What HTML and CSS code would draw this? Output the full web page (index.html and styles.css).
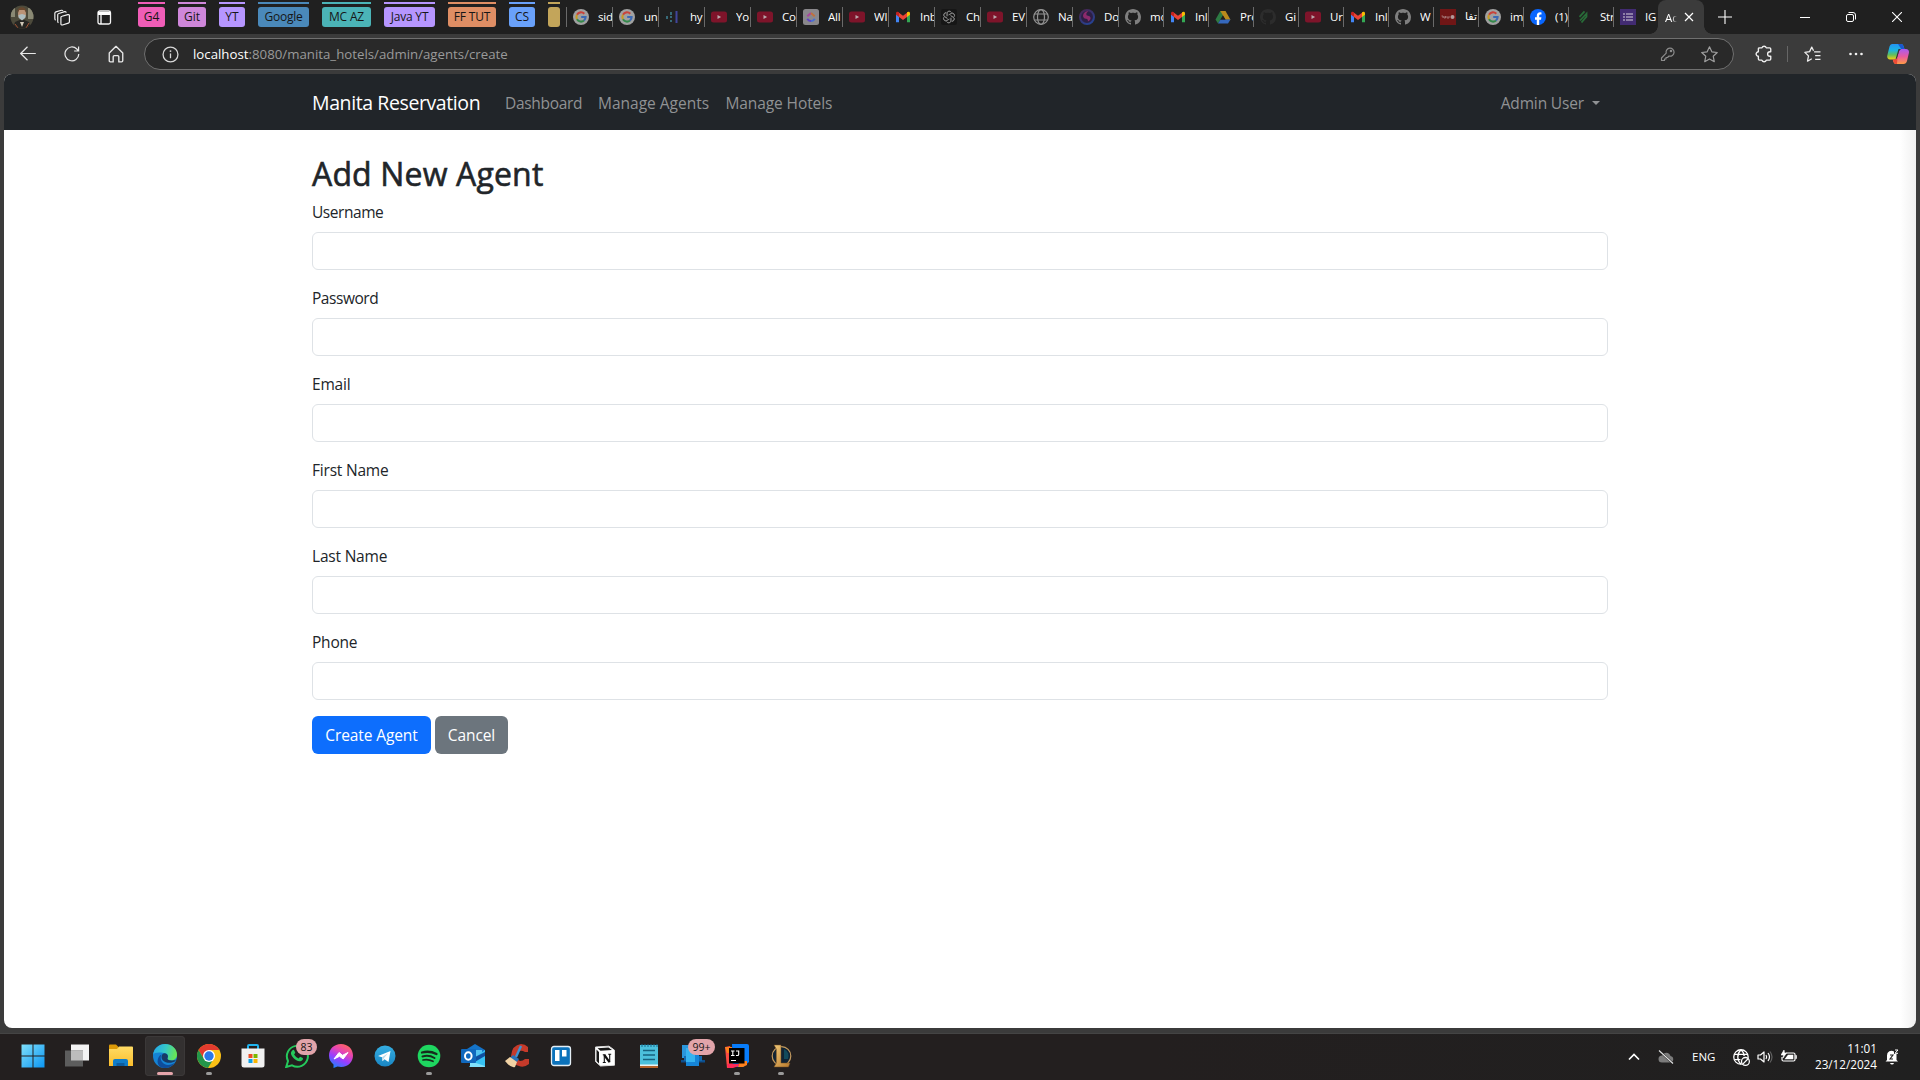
FILE: index.html
```html
<!DOCTYPE html>
<html lang="en">
<head>
<meta charset="utf-8">
<title>Add New Agent</title>
<link rel="stylesheet" href="styles.css">
</head>
<body>
<svg class="defs" aria-hidden="true">
  <defs>
    <linearGradient id="gWin" x1="0" y1="0" x2="1" y2="1"><stop offset="0" stop-color="#7fe0fb"/><stop offset="1" stop-color="#0b95f2"/></linearGradient>
    <linearGradient id="gMsg" x1=".7" y1="0" x2=".2" y2="1"><stop offset="0" stop-color="#ff6560"/><stop offset=".3" stop-color="#e845b0"/><stop offset=".6" stop-color="#9a3cff"/><stop offset="1" stop-color="#1688ff"/></linearGradient>
    <linearGradient id="gFold" x1="0" y1="0" x2="0" y2="1"><stop offset="0" stop-color="#ffdc65"/><stop offset="1" stop-color="#fbbd2c"/></linearGradient>
    <linearGradient id="gTel" x1="0" y1="0" x2="0" y2="1"><stop offset="0" stop-color="#35aee2"/><stop offset="1" stop-color="#1a86c4"/></linearGradient>
    <linearGradient id="gEdge" x1="0" y1=".3" x2="1" y2=".5"><stop offset="0" stop-color="#24a8e8"/><stop offset=".5" stop-color="#36c8c8"/><stop offset="1" stop-color="#6ae84f"/></linearGradient>
    <linearGradient id="gCop1" x1="0" y1="0" x2="0" y2="1"><stop offset="0" stop-color="#2494f4"/><stop offset=".4" stop-color="#1cb5e2"/><stop offset=".7" stop-color="#62bf5b"/><stop offset="1" stop-color="#f6cf14"/></linearGradient>
    <linearGradient id="gCop2" x1="0" y1="0" x2="0" y2="1"><stop offset="0" stop-color="#a75bf2"/><stop offset=".5" stop-color="#e85aa0"/><stop offset="1" stop-color="#ff9b45"/></linearGradient>
    <linearGradient id="gGold" x1="0" y1="0" x2="1" y2="1"><stop offset="0" stop-color="#f0c878"/><stop offset="1" stop-color="#b87a2c"/></linearGradient>
    <linearGradient id="gDoc" x1="0" y1="0" x2=".6" y2="1"><stop offset="0" stop-color="#4a2450"/><stop offset="1" stop-color="#27418f"/></linearGradient>
    <symbol id="google" viewBox="0 0 16 16"><circle cx="8" cy="8" r="8" fill="#a1a1a1"/><g fill="none" stroke-width="2.1"><path d="M11.3 4.7A4.6 4.6 0 0 0 4 5.7" stroke="#c9433a"/><path d="M4 5.7a4.6 4.6 0 0 0 0 4.6" stroke="#c79a24"/><path d="M4 10.3a4.6 4.6 0 0 0 7 1.2" stroke="#35894b"/><path d="M11 11.5A4.6 4.6 0 0 0 12.6 8H8.2" stroke="#3b69b5"/></g></symbol>
    <symbol id="youtube" viewBox="0 0 16 16"><rect y="2.5" width="16" height="11" rx="2.5" fill="#7e142a"/><path d="M6.500 6v4l3.600-2z" fill="#b9a8ac"/></symbol>
    <symbol id="gmail" viewBox="0 0 16 16"><path d="M1 4.5v8.7h3V7z" fill="#4285f4"/><path d="M15 4.5v8.7h-3V7z" fill="#34a853"/><path d="M12 4v4l3-2.2V4.2c0-1.500-1.700-2-3-.9z" fill="#fbbc04"/><path d="M4 8V3.700l4 3 4-3V8l-4 3z" fill="#ea4335"/><path d="M1 5.800 4 8V3.300C2.700 2.300 1 2.800 1 4.300z" fill="#c5221f"/></symbol>
    <symbol id="github" viewBox="0 0 16 16"><path fill="currentColor" d="M8 0C3.580 0 0 3.580 0 8c0 3.540 2.290 6.530 5.470 7.590.4.070.55-.17.55-.38 0-.19-.01-.82-.01-1.490-2.010.37-2.530-.49-2.690-.94-.09-.23-.48-.94-.82-1.130-.28-.15-.68-.52-.01-.53.63-.01 1.080.58 1.230.82.72 1.210 1.870.87 2.330.66.07-.52.28-.87.51-1.070-1.780-.2-3.640-.89-3.640-3.950 0-.87.31-1.590.82-2.150-.08-.2-.36-1.020.08-2.120 0 0 .67-.21 2.200.82.64-.18 1.320-.27 2-.27s1.360.09 2 .27c1.530-1.040 2.200-.82 2.200-.82.44 1.100.16 1.920.08 2.120.51.56.82 1.270.82 2.150 0 3.070-1.870 3.750-3.650 3.950.29.25.54.73.54 1.480 0 1.070-.01 1.930-.01 2.200 0 .21.15.46.55.38A8.010 8.010 0 0 0 16 8c0-4.420-3.580-8-8-8z"/></symbol>
    <symbol id="globe" viewBox="0 0 16 16"><g fill="none" stroke="#929292" stroke-width="1.2"><circle cx="8" cy="8" r="7.300"/><ellipse cx="8" cy="8" rx="3.500" ry="7.300"/><path d="M1.500 5h13M1.500 11h13"/></g></symbol>
    <symbol id="hyper" viewBox="0 0 16 16"><g fill="#376a78"><rect x="1" y="7" width="2" height="3"/><rect x="5" y="3" width="2" height="3"/><rect x="5" y="7" width="2" height="2"/><rect x="5" y="11" width="2" height="2"/></g><rect x="10.500" y="2" width="2" height="12" fill="#41459b"/></symbol>
    <symbol id="clickup" viewBox="0 0 16 16"><rect width="16" height="16" rx="2.500" fill="#8a888c"/><path d="M4.300 7.200 8 4" fill="none" stroke="#a8459c" stroke-width="2"/><path d="m8 4 3.700 3.200" fill="none" stroke="#c0703c" stroke-width="2"/><path d="M4.200 9.800Q6 12 8 12" fill="none" stroke="#5f44c4" stroke-width="2"/><path d="M8 12q2 0 3.800-2.200" fill="none" stroke="#4a6fd0" stroke-width="2"/></symbol>
    <symbol id="gpt" viewBox="0 0 16 16"><rect width="16" height="16" rx="2" fill="#161616"/><g fill="none" stroke="#858585" stroke-width=".8"><path id="petal" d="M6 7.500V4.500a2.300 2.300 0 0 1 4.300-1.200M8 5.800l2.800-1.600a2.300 2.300 0 0 1 2.300 3.500"/><use href="#petal" transform="rotate(60 8 8)"/><use href="#petal" transform="rotate(120 8 8)"/><use href="#petal" transform="rotate(180 8 8)"/><use href="#petal" transform="rotate(240 8 8)"/><use href="#petal" transform="rotate(300 8 8)"/></g></symbol>
    <symbol id="doc" viewBox="0 0 16 16"><circle cx="8" cy="8" r="7" fill="#2c1f45" stroke="url(#gDoc)" stroke-width="2"/><path d="M9.500 2.500A4.500 4.500 0 0 0 4 6.500Q4 9.500 7 9.800q2.500.4 1.800 2.700Q12 11 11.500 8.500 11 7 9 6.800 7 6.500 7.300 4.700 7.800 3 9.500 2.500z" fill="#8c2a6c"/></symbol>
    <symbol id="drive" viewBox="0 0 16 16"><path d="M5.300 2h5.200l-5.300 9L3 14.500.500 10.500z" fill="#2d7a43"/><path d="M5.300 2h5.200l5 8.700h-5z" fill="#b98a1c"/><path d="M5.500 10.500h10L13 14.500H3z" fill="#3568bd"/><path d="m8 6.700 2.500 3.900h-5z" fill="#202020"/></symbol>
    <symbol id="news" viewBox="0 0 16 16"><rect width="16" height="16" fill="#701616"/><path d="M1.500 7h1.500v2M4 7v2h1.500V7M7 7v2h2V7" stroke="#a87a7a" fill="none" stroke-width=".9"/><circle cx="12.500" cy="8" r="2" fill="#b09a9a"/></symbol>
    <symbol id="facebook" viewBox="0 0 16 16"><circle cx="8" cy="8" r="8" fill="#0866ff"/><path d="M6.800 16v-5.200H5V8.300h1.800V7c0-2.600 1.200-3.700 3.300-3.700l1.400.1v2.200h-1c-1 0-1.300.5-1.300 1.500v1.200h2.200l-.4 2.500H9.200V16z" fill="#fff"/></symbol>
    <symbol id="leaf" viewBox="0 0 16 16"><g stroke="#286c38" stroke-width="1.800" fill="none"><path d="m4.500 7.800 5-5.500M5 11.500l6.500-6.800v3L6.500 13.500"/></g></symbol>
    <symbol id="forms" viewBox="0 0 16 16"><rect width="16" height="16" fill="#422b72"/><path d="M3 5h2M3 8h2M3 11h2M6 5h7M6 8h7M6 11h7" stroke="#a69bb9" stroke-width="1.700"/></symbol>
  </defs>
</svg>

<header class="tabstrip">
  <svg class="avatar" viewBox="0 0 24 24"><clipPath id="face"><circle cx="12" cy="12" r="11.500"/></clipPath><g clip-path="url(#face)"><path d="M0 0h24v24H0z" fill="#4d4a3b"/><path d="M1 3h4v9H1zM18 3h6v11h-6z" fill="#8a8974"/><path d="M3 24 5 17l7-3 7 3 2 7z" fill="#262522"/><ellipse cx="12" cy="9" rx="4" ry="5.500" fill="#bb9377"/><path d="M7.500 8c-1-7 9-8 9 0l-2-3H9z" fill="#68482f"/><path d="m8.500 10 3.500-1 3.500 1v2.500L12 15.500l-3.500-3z" fill="#aebdc0"/><path d="m10 17 2 5 2-5z" fill="#d0c8b8"/><path d="M5 19l3 4M19 18l-3 5" stroke="#a65636"/></g></svg>
  <svg class="ic workspaces" viewBox="0 0 16 16" fill="none" stroke="#f2f2f2" stroke-width="1.100" stroke-linejoin="round"><path d="m7.500 6.800 5.500-1.500q1.500-.3 1.500 1V12q0 1-1 1.300L8 15q-1.500.3-1.500-1V8q0-1 1-1.200z"/><path d="M4.200 13Q3.500 12.500 3.500 11.500V5.500q0-1 1-1.300L10 2.500q1.300-.2 1.400 1M1.500 10.500Q.800 10 .800 9V4q0-1 1-1.300L7 1.200Q8 1 8.500 1.600"/></svg>
  <svg class="ic taballey" viewBox="0 0 16 16"><rect x="2" y="2" width="12.500" height="13" rx="1.800" fill="none" stroke="#f4f4f4" stroke-width="1.300"/><path d="M2 3h12.500v3H2z" fill="#fff"/><path d="M5 5v10" stroke="#fff" stroke-width="1.300"/></svg>
  <nav class="groups">
    <span class="group g-pink">G4</span><span class="group g-orchid">Git</span><span class="group g-violet yt">YT</span><span class="group g-blue">Google</span><span class="group g-teal">MC AZ</span><span class="group g-violet java">Java YT</span><span class="group g-orange">FF TUT</span><span class="group g-sky">CS</span><span class="group g-gold"></span>
  </nav>
  <nav class="tabs">
    <div class="tab"><svg><use href="#google"/></svg><span>sid</span></div>
    <div class="tab"><svg><use href="#google"/></svg><span>uni</span></div>
    <div class="tab"><svg><use href="#hyper"/></svg><span>hy</span></div>
    <div class="tab"><svg><use href="#youtube"/></svg><span>Yo</span></div>
    <div class="tab"><svg><use href="#youtube"/></svg><span>Co</span></div>
    <div class="tab"><svg><use href="#clickup"/></svg><span>All</span></div>
    <div class="tab"><svg><use href="#youtube"/></svg><span>Wl</span></div>
    <div class="tab"><svg><use href="#gmail"/></svg><span>Inb</span></div>
    <div class="tab"><svg><use href="#gpt"/></svg><span>Ch</span></div>
    <div class="tab"><svg><use href="#youtube"/></svg><span>EV</span></div>
    <div class="tab"><svg><use href="#globe"/></svg><span>Na</span></div>
    <div class="tab"><svg><use href="#doc"/></svg><span>Do</span></div>
    <div class="tab narrow"><svg><use href="#github"/></svg><span>mo</span></div>
    <div class="tab narrow"><svg><use href="#gmail"/></svg><span>Inl</span></div>
    <div class="tab narrow"><svg><use href="#drive"/></svg><span>Pro</span></div>
    <div class="tab narrow dim"><svg><use href="#github"/></svg><span>Gi</span></div>
    <div class="tab narrow"><svg><use href="#youtube"/></svg><span>Ur</span></div>
    <div class="tab narrow"><svg><use href="#gmail"/></svg><span>Inl</span></div>
    <div class="tab narrow"><svg><use href="#github"/></svg><span>W</span></div>
    <div class="tab narrow"><svg><use href="#news"/></svg><span class="ar">تفا</span></div>
    <div class="tab narrow"><svg><use href="#google"/></svg><span>im</span></div>
    <div class="tab narrow"><svg><use href="#facebook"/></svg><span>(1)</span></div>
    <div class="tab narrow"><svg><use href="#leaf"/></svg><span>Str</span></div>
    <div class="tab narrow"><svg><use href="#forms"/></svg><span>IG</span></div>
  </nav>
  <div class="tab-active"><span>Ad</span><svg viewBox="0 0 10 10"><path d="m1 1 8 8M9 1 1 9" stroke="#fff" stroke-width="1.200"/></svg></div>
  <svg class="newtab" viewBox="0 0 14 14"><path d="M7 0v14M0 7h14" stroke="#fff" stroke-width="1.100"/></svg>
  <div class="winbtns">
    <svg viewBox="0 0 10 10"><path d="M0 5.500h10" stroke="#fff"/></svg>
    <svg viewBox="0 0 10 10" fill="none" stroke="#fff"><rect x=".5" y="2.500" width="7" height="7" rx="1.500"/><path d="M2.500.5H7q2.500 0 2.500 2.500v4.500"/></svg>
    <svg viewBox="0 0 10 10"><path d="m0 0 10 10M10 0 0 10" stroke="#fff" stroke-width="1.100"/></svg>
  </div>
</header>

<div class="toolbar">
  <svg class="ic back" viewBox="0 0 16 16" fill="none" stroke="#e8e8e8" stroke-width="1.200"><path d="M15.800 7.500H.700M7.500.8.700 7.500l6.800 6.700"/></svg>
  <svg class="ic reload" viewBox="0 0 16 16" fill="none" stroke="#e8e8e8" stroke-width="1.200"><path d="M14.800 8A6.900 6.900 0 1 1 12.800 3L14.500 5M14.600.5V5h-4.500"/></svg>
  <svg class="ic home" viewBox="0 0 16 16" fill="none" stroke="#e8e8e8" stroke-width="1.200" stroke-linejoin="round"><path d="M2 7.200 8 1.200l6 6V14q0 1-1 1h-2.500v-4.500q0-1-1-1h-3q-1 0-1 1V15H3q-1 0-1-1z"/></svg>
  <div class="omnibox">
    <svg class="info" viewBox="0 0 16 16"><circle cx="8" cy="8" r="7" fill="none" stroke="#d8d8d8" stroke-width="1.200"/><path d="M8 7v4.500" stroke="#d8d8d8" stroke-width="1.200"/><circle cx="8" cy="4.800" r=".9" fill="#d8d8d8"/></svg>
    <span class="url"><b>localhost</b>:8080/manita_hotels/admin/agents/create</span>
    <svg class="key" viewBox="0 0 16 16" fill="none" stroke="#8c8c8c" stroke-width="1.200" stroke-linejoin="round"><path d="M6.200 7.200A4 4 0 1 1 9 10L7.500 11.500H6V13H4.500v1.500H1.500V12z"/><circle cx="11" cy="5" r=".7"/></svg>
    <svg class="star" viewBox="0 0 16 16" fill="none" stroke="#a0a0a0" stroke-width="1.100" stroke-linejoin="round"><path d="m8 .8 2.200 4.700 5.100.6-3.800 3.500 1 5.200L8 12.200l-4.500 2.600 1-5.200L.7 6.100l5.100-.6z"/></svg>
  </div>
  <svg class="ic puzzle" viewBox="0 0 16 16" fill="none" stroke="#efefef" stroke-width="1.200" stroke-linejoin="round"><path d="M4 2.500h2.200a2 2 0 0 1 3.800 0H13q1 0 1 1V6h-.8a2 2 0 0 0 0 4h.8v2.500q0 1-1 1h-3a2 2 0 0 1-3.800 0H4q-1 0-1-1V10a2 2 0 0 1 0-4V3.500q0-1 1-1z"/></svg>
  <i class="divider"></i>
  <svg class="ic favs" viewBox="0 0 16 16" fill="none" stroke="#efefef" stroke-width="1.200" stroke-linejoin="round"><path d="M9.500 5.500H15.500M10.500 9h5M10.500 12.500h5M9 4.500 7.300 1 5.300 5.300.8 6l3.400 3.300-.9 5 4-2.300"/></svg>
  <svg class="ic dots" viewBox="0 0 16 16" fill="#f2f2f2"><circle cx="2.500" cy="8" r="1.300"/><circle cx="8" cy="8" r="1.300"/><circle cx="13.500" cy="8" r="1.300"/></svg>
  <svg class="copilot" viewBox="0 0 22 20"><path d="M5 0h9q2 0 2.500 2L17.500 5h-3q-2 0-2.600 2L9.500 14q-.7 1.500-2.500 1.500H3Q-.3 15 .3 11.500L2.500 2.500Q3.200 0 5 0z" fill="url(#gCop1)"/><path d="M11 0h3q2 0 2.500 2l1 3.500h-3z" fill="#1a57d0"/><path d="M17.500 5H19q3.500.5 2.900 4L20 17q-.8 3-3.500 3H9Q7 20 6.500 18l-.8-2.500H7.500q2 0 2.600-2L12 7q.6-2 2.500-2z" fill="url(#gCop2)"/><path d="M6 15.500h2q2 0 2.500-2L10 20H9Q7 20 6.500 18z" fill="#ee4b35"/><path d="M11.500 5h2.700q-1.500.5-2 2L10 14q-.5 1-1.500 1.400z" fill="#353535"/></svg>
</div>

<main class="viewport">
  <div class="navbar">
    <div class="container nav-inner">
      <a class="brand">Manita Reservation</a>
      <a class="link l-dash">Dashboard</a>
      <a class="link l-agents">Manage Agents</a>
      <a class="link l-hotels">Manage Hotels</a>
      <a class="link user"><span>Admin User</span><i class="caret"></i></a>
    </div>
  </div>
  <form class="container form">
    <h2><span>Add New Agent</span></h2>
    <label for="f1" class="tight">Username</label><input id="f1" type="text">
    <label for="f2" class="tight">Password</label><input id="f2" type="password">
    <label for="f3">Email</label><input id="f3" type="email">
    <label for="f4">First Name</label><input id="f4" type="text">
    <label for="f5">Last Name</label><input id="f5" type="text">
    <label for="f6">Phone</label><input id="f6" type="text">
    <div class="actions"><button type="button" class="btn primary">Create Agent</button><button type="button" class="btn secondary">Cancel</button></div>
  </form>
</main>

<footer class="taskbar">
  <div class="apps">
    <div class="app"><svg viewBox="0 0 24 24"><path d="M.5.500h11v11H.5zM12.500.500h11v11h-11zM.5 12.500h11v11H.5zM12.500 12.500h11v11h-11z" fill="url(#gWin)"/></svg></div>
    <div class="app"><svg viewBox="0 0 24 24"><path d="M6 .500h18v16H6z" fill="#f3f3f3"/><path d="M0 6.500h18v16H0z" fill="#5d5d5d"/><path d="M6 6.500h12v10H6z" fill="#bdbdbd"/></svg></div>
    <div class="app"><svg viewBox="0 0 24 24"><path d="M0 1.500Q0 .5 1 .5h6L9.500 3v4H0z" fill="#dc9a08"/><path d="M0 5h8l2-2.500h13q1 0 1 1V22H0z" fill="url(#gFold)"/><path d="M4 22v-5q0-2 2-2h11q2 0 2 2v5z" fill="#0f7cc9"/><path d="M7.500 19h8v3h-8z" fill="#0d5c9f"/></svg></div>
    <div class="app active"><svg viewBox="0 0 24 24"><circle cx="12" cy="12" r="12" fill="#1583d4"/><path d="M0 11C1 4 6 0 12 0c7 0 12 5 12 10.500 0 4-3 6-6 6-3 0-4-1.500-3.500-2.500 1-1.500.5-5-3.500-5C5 8 1 8.500 0 11z" fill="url(#gEdge)"/><path d="M8.500 10.500C6 15 9 20.500 15 21c3 0 5-1 7-2.500-4 5.500-10 6.500-14.500 4.500C3 20 4 12.500 8.500 10.500z" fill="#0f4d9c"/><path d="M14.500 14c1-1.500.5-4.500-3-4.800-3 .3-4 4.500-1.500 7.300 3 3 9 3 12.500.5 1-1-1-.7-3-.5-3.500.3-5.500-1-5-2.500z" fill="#173a66"/></svg><i class="run wide"></i></div>
    <div class="app"><svg viewBox="0 0 24 24"><circle cx="12" cy="12" r="12" fill="#fbc116"/><path d="M1.600 6A12 12 0 0 1 22.400 6H12L7 15z" fill="#e33b2e"/><path d="M1.600 6A12 12 0 0 0 11 24l5.500-9H7z" fill="#23964a"/><circle cx="12" cy="12" r="6" fill="#fff"/><circle cx="12" cy="12" r="4.700" fill="#2a78e8"/></svg><i class="run"></i></div>
    <div class="app"><svg viewBox="0 0 24 24"><path d="M7 6V2q0-1 1-1h8q1 0 1 1v4" fill="none" stroke="#1fb3ee" stroke-width="2"/><path d="M.5 4.500h23V21q0 2.500-2.500 2.500H3Q.5 23.500.5 21z" fill="#f1f1f1"/><path d="M7.500 10h4v4h-4z" fill="#ee4d25"/><path d="M12.500 10h4v4h-4z" fill="#7bb800"/><path d="M7.500 15h4v4h-4z" fill="#09a0e8"/><path d="M12.500 15h4v4h-4z" fill="#fbb500"/></svg></div>
    <div class="app"><svg viewBox="0 0 24 24"><path d="M1.200 23 3 17A10.500 10.500 0 1 1 7 21.300z" fill="none" stroke="#25c95c" stroke-width="2"/><path d="M7.500 6.200q1-.8 1.800.3l1 2.200-1.200 1.700q1.600 2.800 4.500 4l1.500-1.700 2.700 1.200c.8 1.200-.8 3-2.300 3.300C11.500 18.300 5 11.500 6 8.500q.5-1.600 1.500-2.300z" fill="#25c95c"/></svg><b class="badge">83</b></div>
    <div class="app"><svg viewBox="0 0 24 24"><path d="M12 0C5 0 0 5 0 11.500c0 4 1.500 6.500 4.500 9V24l4-1.500C18 24.500 24 18.500 24 11.500 24 5 19 0 12 0z" fill="url(#gMsg)"/><path d="m5 15 5-6.500 3.500 2.800L19 8.500 14.200 15l-3.700-2.700z" fill="#fff" stroke="#fff"/></svg></div>
    <div class="app"><svg viewBox="0 0 24 24"><circle cx="12" cy="12" r="10.500" fill="url(#gTel)"/><path d="m5 12 12.500-5-2 11-4-2.800-2 2-.5-4z" fill="#fff"/><path d="m9 13.200 6-4-4.200 5-1 3z" fill="#b9d9ea"/></svg></div>
    <div class="app"><svg viewBox="0 0 24 24"><circle cx="12" cy="12" r="11.300" fill="#1ed760"/><g fill="none" stroke="#172b1d" stroke-linecap="round"><path d="M5 8.500q7.500-2 14.500 1.500" stroke-width="2.300"/><path d="M5.500 12.500q6.500-1.800 12 1.500" stroke-width="2"/><path d="M6 16q5-1.200 10 1.300" stroke-width="1.700"/></g></svg><i class="run"></i></div>
    <div class="app"><svg viewBox="0 0 24 24"><path d="M6 5 14 0l10 6v5H6z" fill="#1473c8"/><path d="M9 6h12v10H9z" fill="#55c3f0"/><path d="M17 11 24 6v17H8z" fill="#37c2f3"/><path d="M8 16 24 8v4L12 19z" fill="#1050a0"/><path d="M9 17l15 5q0 1-1 1H9z" fill="#80e1fb"/><rect y="5" width="15" height="14" rx="1" fill="#1068bd"/><ellipse cx="7.300" cy="12" rx="3.300" ry="3.700" fill="none" stroke="#fff" stroke-width="2"/></svg></div>
    <div class="app"><svg viewBox="0 0 24 24"><path d="M23 3v5h-3q-5-3-8 1-2 6 3 8 3 0 5-2h4v5q-5 4-10 2Q6 20 6 12 7 1 16 0q4 0 7 3z" fill="#c53a2a"/><path d="m16 2-5 11" stroke="#3d93d3" stroke-width="2.400"/><path d="m8 11 6 4-2 3-7-4z" fill="#2873ba"/><path d="m5 13 7 5-2 5q-4 1.500-10-6z" fill="#f1d3a5"/></svg></div>
    <div class="app"><svg viewBox="0 0 24 24"><rect x="2.500" y="2.500" width="19" height="19" rx="2.500" fill="#0b72bb" stroke="#e4eef5" stroke-width="1.300"/><path d="M6 6h4.500v11H6zM13 6h4.500v6.500H13z" fill="#fff"/></svg></div>
    <div class="app"><svg viewBox="0 0 24 24"><path d="m2.500 3 13.500-.800 5.500 4v15L7.500 22l-5-4.500z" fill="#fff" stroke="#ddd"/><path d="M4.500 4.300 15.500 3.500 19 6 7.500 6.700zM3.500 5.500 6 8v11.500L3.500 17z" fill="#171717"/><path d="M7.500 7.800 20.700 7V20.500L7.500 21.300z" fill="#fff"/><path d="m11.300 11 5.200 7.200" stroke="#111" stroke-width="2.200"/><path d="M11.300 10.500v8M16.700 10.200v8M9.800 10.700h2.500M9.800 18.500h3M15.200 10.300h3" fill="none" stroke="#111" stroke-width="1.100"/></svg></div>
    <div class="app"><svg viewBox="0 0 24 24"><path d="M3 1h18v20H3z" fill="#4cc0dc"/><path d="M3 20.500h18V22H3z" fill="#e9f4f5"/><path d="M3 22h18v2H3z" fill="#b4622a"/><path d="M5 0v3M8 0v3M11 0v3M14 0v3M17 0v3M20 0v3" stroke="#146c91"/><path d="M6 6.500h12M6 11h12M6 15.500h12" stroke="#16627f" stroke-width="1.500"/></svg></div>
    <div class="app"><svg viewBox="0 0 24 24"><path d="M1 1h10v13H1z" fill="#2a96dc"/><path d="M0 16h24v2.500H0z" fill="#0d4f8e"/><path d="M3 12h18v5H3z" fill="#1268af"/><path d="M5 4h13v18H5z" fill="#1685d8"/><path d="M5 4h9v14H5z" fill="#35b3f0"/></svg><b class="badge long">99+</b></div>
    <div class="app"><svg viewBox="0 0 24 24"><path d="M0 3 5 2l8 20-11 2z" fill="#fc4a44"/><path d="M0 3h7v6H2z" fill="#fc801d"/><path d="M7 0h15q2 0 2 2v16l-6 5H8z" fill="#087cfa"/><path d="M14 17h8v4l-4 2h-5z" fill="#fc801d"/><path d="M2 20h12v2l-6 2H3z" fill="#fe2857"/><path d="M4 4h15.500v15.500H4z" fill="#000"/><path d="M6 7h3.500M7.800 7v4.500M6 11.500h3.500M11 7h2.700v3.500q0 1-1.200 1H11M6 16.500h5" fill="none" stroke="#fff" stroke-width="1.100"/></svg><i class="run"></i></div>
    <div class="app"><svg viewBox="0 0 24 24"><circle cx="12.500" cy="12" r="9.300" fill="#102334" stroke="#c39a5e" stroke-width="1.200"/><path d="M15 5a7.500 7.500 0 0 1 4 10h-4z" fill="#124a5c"/><path d="M5 1h7v18h9l-1.500 4H5l2.300-4V5z" fill="url(#gGold)" stroke="#6d4920" stroke-width=".5"/></svg><i class="run"></i></div>
  </div>
  <div class="tray">
    <svg class="t-up" viewBox="0 0 12 8"><path d="m1 6.500 5-5 5 5" fill="none" stroke="#fff" stroke-width="1.700"/></svg>
    <svg class="t-cloud" viewBox="0 0 16 14"><path d="M4 12.500a3.500 3.500 0 0 1 0-7 4.500 4.500 0 0 1 8.500.5 3.300 3.300 0 0 1 0 6.500z" fill="#7b7b7b"/><path d="m1 .500 14 13" stroke="#202020" stroke-width="2.200"/><path d="m1 .500 14 13" stroke="#e5e5e5" stroke-width="1.100"/></svg>
    <span class="lang">ENG</span>
    <svg class="t-net" viewBox="0 0 16 16" fill="none" stroke="#fff" stroke-width="1.200"><circle cx="7.500" cy="7.500" r="6.800"/><path d="M7.500.7c-4 4-4 9.600 0 13.600M7.500.7q3 2.500 3 6M1.500 5h12M1.500 10H7"/><circle cx="11.700" cy="11.700" r="3.700" fill="#202020"/><path d="m9.200 14.200 5-5"/></svg>
    <svg class="t-vol" viewBox="0 0 16 14" fill="none" stroke="#fff" stroke-width="1.200" stroke-linejoin="round"><path d="M1 5h2.500L7 2v10L3.500 9H1zM9 5q1.300 2 0 4M11 3q3 4 0 8"/><path d="M13 1.500q4 5.500 0 11" stroke="#606060"/></svg>
    <svg class="t-bat" viewBox="0 0 16 14"><path d="M5 3h7.500q1.500 0 1.500 1.500v5q0 1.500-1.500 1.500h-10Q1 11 1 9.500V7" fill="none" stroke="#fff" stroke-width="1.200"/><path d="M7 4.800h5.300v4.500H3.500z" fill="#fff"/><path d="M14.500 5.500h1v3h-1M3 0 0 5h2.500L2 8l3.500-5H3.500z" fill="#fff" stroke="#fff" stroke-width=".6"/></svg>
    <div class="clock"><span>11:01</span><span>23/12/2024</span></div>
    <svg class="t-bell" viewBox="0 0 14 16"><path d="M2 11V6.500a4.500 4.500 0 0 1 7-4V5h2.500v6l1.500 1.500H.500zM5 14h4q-.5 1.500-2 1.500T5 14z" fill="#fff"/><path d="M5 6h3L5 10h3" fill="none" stroke="#202020" stroke-width="1.100"/><path d="M10 1h3l-3 3.300h3" fill="none" stroke="#fff"/></svg>
  </div>
</footer>
</body>
</html>
```

FILE: styles.css
```css
* { box-sizing: border-box; }
body {
  margin: 0; width: 1920px; height: 1080px; overflow: hidden;
  display: flex; flex-direction: column;
  background: #3b3b3b;
  font-family: "Open Sans", "Noto Sans", sans-serif;
}
svg { display: block; flex: none; }
.defs { position: absolute; width: 0; height: 0; }

/* Tab strip */
.tabstrip { height: 34px; flex: none; display: flex; align-items: center; background: #202020; color: #fff; }
.ic { width: 16px; height: 16px; }
.avatar { width: 24px; height: 24px; margin-left: 10px; }
.workspaces { width: 17px; height: 17px; margin-left: 20px; }
.taballey { margin-left: 25px; }
.groups { display: flex; height: 34px; padding-left: 26px; gap: 13px; }
.group {
  position: relative; height: 20px; margin-top: 7px; border-radius: 3px;
  background: var(--c); color: #161616; font-size: 12px; line-height: 20px; text-align: center; white-space: nowrap;
}
.group::before { content: ""; position: absolute; left: 0; right: 0; top: -5px; height: 2px; background: var(--c); }
.g-pink { --c: #f05db7; width: 27px; }
.g-orchid { --c: #cf87da; width: 28px; }
.g-violet { --c: #b696ff; }
.yt { width: 26px; }
.java { width: 51px; letter-spacing: -.2px; }
.g-blue { --c: #4a89ba; width: 51px; letter-spacing: -.2px; }
.g-teal { --c: #4bb4b7; width: 49px; letter-spacing: -.2px; }
.g-orange { --c: #df8e64; width: 48px; letter-spacing: -.2px; }
.g-sky { --c: #69a1fa; width: 26px; }
.g-gold { --c: #c3a55a; width: 12px; }
.tabs { display: flex; margin-left: auto; }
.tab {
  width: 46px; height: 20px; padding-left: 6px; border-left: 1px solid #6a6a6a;
  display: flex; align-items: center; overflow: hidden; color: #fff; font-size: 11.500px; letter-spacing: -.2px; white-space: nowrap;
}
.tab.narrow { width: 45px; }
.tab svg { width: 16px; height: 16px; margin-right: 9px; color: #7f7f7f; }
.tab.dim svg { color: #2c2c2c; }
.tab span { flex: 1; min-width: 0; height: 18px; line-height: 18px; overflow: hidden; }
.tab .ar { font-family: "DejaVu Sans", sans-serif; font-size: 11px; letter-spacing: 0; }
.tab-active {
  position: relative; width: 46px; height: 34px; flex: none; display: flex; align-items: center;
  padding-left: 7px; background: #3b3b3b; border-radius: 8px 8px 0 0; font-size: 11.500px;
}
.tab-active::before, .tab-active::after {
  content: ""; position: absolute; bottom: 0; width: 8px; height: 8px;
}
.tab-active::before { left: -8px; background: radial-gradient(circle at 0 0, #202020 7.500px, #3b3b3b 8px); }
.tab-active::after { right: -8px; background: radial-gradient(circle at 100% 0, #202020 7.500px, #3b3b3b 8px); }
.tab-active span { width: 12px; overflow: hidden; -webkit-mask: linear-gradient(90deg, #000 60%, transparent); mask: linear-gradient(90deg, #000 60%, transparent); }
.tab-active svg { width: 10px; height: 10px; margin-left: 7px; }
.newtab { width: 14px; height: 14px; margin-left: 14px; }
.winbtns { width: 188px; flex: none; display: flex; justify-content: space-between; padding: 0 18px 0 68px; }
.winbtns svg { width: 10px; height: 10px; }

/* Address bar */
.toolbar { height: 40px; flex: none; display: flex; align-items: center; }
.back { margin-left: 20px; }
.reload { margin-left: 28px; }
.home { margin-left: 27px; width: 18px; height: 18px; }
.omnibox {
  width: 1590px; height: 32px; margin-left: 19px; display: flex; align-items: center;
  border: 1px solid #707070; border-radius: 16px; background: #292929;
}
.info { width: 17px; height: 17px; margin-left: 17px; }
.url { margin-left: 14px; font-size: 13.250px; line-height: 20px; color: #9a9a9a; }
.url b { font-weight: 400; color: #fff; }
.key { width: 16px; height: 16px; margin-left: auto; }
.star { width: 17px; height: 17px; margin: 0 15px 0 25px; }
.puzzle { width: 18px; height: 18px; margin-left: 21px; }
.divider { width: 1px; height: 16px; margin-left: 14px; background: #666; }
.favs { width: 17px; height: 17px; margin-left: 16px; }
.dots { margin-left: 27px; }
.copilot { width: 22px; height: 20px; margin-left: 23px; }

/* Page */
.viewport {
  height: 954px; flex: none; margin: 0 4px; border-radius: 8px; overflow: hidden;
  background: linear-gradient(90deg, #fff calc(100% - 16px), #f0f0f0);
  color: #212529; font-size: 15.500px;
}
.navbar { height: 56px; background: #212529; }
.container { width: 1296px; margin: 0 auto; }
.nav-inner { height: 56px; display: flex; align-items: center; }
.brand { width: 193px; color: #fff; font-size: 19.500px; letter-spacing: -.4px; white-space: nowrap; }
.link { color: #909294; white-space: nowrap; line-height: 24px; padding-top: 1px; }
.l-dash { width: 93px; letter-spacing: -.3px; }
.l-agents { width: 127.500px; }
.l-hotels { letter-spacing: -.1px; }
.user { margin-left: auto; margin-right: 8px; display: flex; align-items: center; gap: 8px; letter-spacing: -.15px; }
.caret { border: 4.800px solid transparent; border-top-color: #909294; border-bottom: 0; border-left-width: 4px; border-right-width: 4px; }
.form { padding-top: 24px; }
h2 { margin: 0 0 8px; font-size: 32px; font-weight: 400; line-height: 40.400px; height: 38.400px; letter-spacing: .15px; -webkit-text-stroke: .6px #212529; }
label { display: block; height: 24px; line-height: 25.200px; margin-bottom: 8px; letter-spacing: -.2px; }
label.tight { letter-spacing: -.45px; }
input { display: block; width: 100%; height: 38px; margin: 0 0 16px; border: 1px solid #dee2e6; border-radius: 6px; background: #fff; }
.actions { display: flex; gap: 4px; }
.btn { height: 38px; border: 0; border-radius: 6px; padding: 0; color: #fff; font: inherit; line-height: 38px; letter-spacing: -.1px; white-space: nowrap; }
.primary { width: 119px; background: #0d6efd; }
.secondary { width: 73px; background: #6c757d; }

/* Taskbar */
.taskbar { height: 47px; flex: none; margin-top: 5px; display: flex; justify-content: space-between; border-top: 1px solid #444; color: #fff; background: linear-gradient(90deg, #231f1f 60%, #202020); }
.apps { display: flex; gap: 4px; padding: 2px 0 0 13px; }
.app { position: relative; width: 40px; height: 40px; display: flex; align-items: center; justify-content: center; border-radius: 4px; }
.app.active { background: #333030; box-shadow: inset 0 0 0 1px #3b3838; }
.app svg { width: 24px; height: 24px; }
.run { position: absolute; left: 17px; bottom: 1px; width: 6px; height: 3px; border-radius: 2px; background: #9a9a9a; }
.run.wide { left: 12px; width: 16px; background: #e6a5ab; }
.badge {
  position: absolute; left: 19px; top: 3px; width: 21px; height: 16px; border-radius: 8px;
  background: #e2a4aa; color: #151515; font-size: 10.500px; font-weight: 400; line-height: 16px; text-align: center;
}
.badge.long { left: 15px; width: 27px; }
.tray { display: flex; align-items: center; height: 46px; font-size: 11.500px; }
.t-up { width: 12px; height: 8px; }
.t-cloud { width: 16px; height: 14px; margin-left: 18px; }
.lang { width: 24px; margin-left: 18px; margin-top: -1px; }
.t-net { width: 17px; height: 17px; margin-left: 17px; }
.t-vol { width: 16px; height: 14px; margin-left: 7px; }
.t-bat { width: 16px; height: 14px; margin-left: 8px; }
.clock { width: 80px; display: flex; flex-direction: column; align-items: flex-end; line-height: 16px; font-size: 11.700px; padding-bottom: 3px; }
.t-bell { width: 14px; height: 16px; margin: 0 21px 0 8px; }
```
